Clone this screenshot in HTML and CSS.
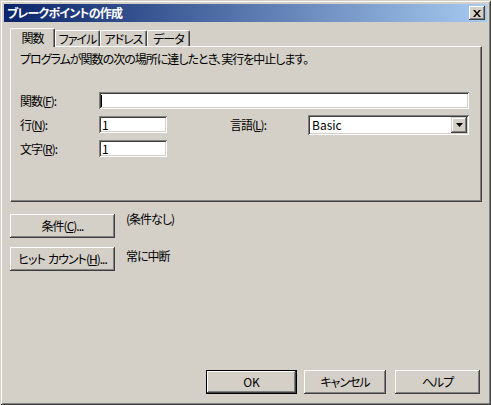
FILE: index.html
```html
<!DOCTYPE html>
<html lang="ja">
<head>
<meta charset="utf-8">
<link rel="stylesheet" href="styles.css">
</head>
<body>
<div class="window">
  <div class="titlebar">
    <span class="title">ブレークポイントの作成</span>
    <button class="close" aria-label="閉じる">
      <svg width="8" height="7" viewBox="0 0 8 7"><path d="M0 0h2l2 2.5L6 0h2L5 3.5 8 7H6L4 4.5 2 7H0l3-3.5z" fill="#000"/></svg>
    </button>
  </div>
  <div class="client">
    <div class="tabs">
      <div class="tab active t1">関数</div>
      <div class="tab t2">ファイル</div>
      <div class="tab t3">アドレス</div>
      <div class="tab t4">データ</div>
    </div>
    <div class="panel">
      <p class="desc">プログラムが関数の次の場所に達したとき、実行を中止します。</p>
      <div class="form">
        <div class="row">
          <span class="label">関数(<u>F</u>):</span>
          <div class="field wide"><span class="caret"></span></div>
        </div>
        <div class="row row-top">
          <span class="label">行(<u>N</u>):</span>
          <div class="field short">1</div>
          <span class="label lang">言語(<u>L</u>):</span>
          <div class="combo">
            <span class="combo-text">Basic</span>
            <span class="combo-btn"><svg width="7" height="4" viewBox="0 0 7 4"><path d="M0 0h7L3.5 4z" fill="#000"/></svg></span>
          </div>
        </div>
        <div class="row">
          <span class="label">文字(<u>R</u>):</span>
          <div class="field short">1</div>
        </div>
      </div>
    </div>
    <div class="action first">
      <button class="btn side">条件(<u>C</u>)...</button>
      <span class="note">(条件なし)</span>
    </div>
    <div class="action second">
      <button class="btn side">ヒット&nbsp; カウント(<u>H</u>)...</button>
      <span class="note">常に中断</span>
    </div>
    <div class="footer">
      <button class="btn ok">OK</button>
      <button class="btn cancel">キャンセル</button>
      <button class="btn help">ヘルプ</button>
    </div>
  </div>
</div>
</body>
</html>
```
FILE: styles.css
```css
* {
  box-sizing: border-box;
  margin: 0;
  padding: 0;
}

body {
  margin: 0;
  width: 491px;
  height: 405px;
  overflow: hidden;
  background: #d4d0c8;
  font-family: "Noto Sans CJK JP", sans-serif;
  font-size: 12px;
  line-height: 14px;
  color: #000;
  font-feature-settings: "palt";
  letter-spacing: -1px;
}

.window {
  width: 491px;
  height: 405px;
  padding: 4px;
  display: flex;
  flex-direction: column;
  background: #d4d0c8;
  box-shadow: inset 1px 1px 0 #d4d0c8, inset -1px -1px 0 #404040, inset 2px 2px 0 #fff, inset -2px -2px 0 #808080;
}

.titlebar {
  height: 18px;
  display: flex;
  align-items: center;
  justify-content: space-between;
  padding: 0 2px 0 3px;
  background: linear-gradient(to right, #0a246a, #a6caf0);
  color: #fff;
  font-weight: bold;
}

.title {
  line-height: 18px;
  letter-spacing: -0.8px;
}

.close {
  width: 16px;
  height: 14px;
  border: none;
  background: #d4d0c8;
  display: flex;
  align-items: center;
  justify-content: center;
  box-shadow: inset -1px -1px 0 #404040, inset 1px 1px 0 #fff, inset -2px -2px 0 #808080;
}

.close svg {
  display: block;
  margin: 0 0 0 -1px;
}

.client {
  flex: 1;
  display: flex;
  flex-direction: column;
  padding: 6px 5px 7px 6px;
}

.tabs {
  display: flex;
  align-items: flex-end;
  height: 18px;
  position: relative;
  z-index: 1;
}

.tab {
  height: 16px;
  border-top: 1px solid #fff;
  border-left: 1px solid #fff;
  border-right: 1px solid #404040;
  border-radius: 2px 2px 0 0;
  box-shadow: inset -1px 0 0 #808080;
  background: #d4d0c8;
  text-align: center;
  line-height: 16px;
}

.tab.active {
  height: 19px;
  margin-bottom: -1px;
  line-height: 17px;
}

.t1 { width: 45px; }
.t2 { width: 45px; }
.t3 { width: 47px; }
.t4 { width: 43px; }

.panel {
  width: 472px;
  height: 156px;
  border-top: 1px solid #fff;
  border-left: 1px solid #fff;
  border-right: 1px solid #404040;
  border-bottom: 1px solid #404040;
  box-shadow: inset -1px -1px 0 #808080;
  padding: 5px 0 0 9px;
}

.desc {
  line-height: 14px;
}

.form {
  margin-top: 26px;
  display: flex;
  flex-direction: column;
  gap: 7px;
}

.row {
  display: flex;
  align-items: center;
  height: 17px;
}

.row-top {
  align-items: flex-start;
}

.label {
  width: 79px;
  line-height: 17px;
}

.lang {
  width: 78px;
  margin-left: 63px;
}

.field {
  height: 17px;
  background: #fff;
  padding: 0 3px;
  line-height: 17px;
  display: flex;
  align-items: center;
  box-shadow: inset 1px 1px 0 #808080, inset -1px -1px 0 #fff, inset 2px 2px 0 #404040, inset -2px -2px 0 #d4d0c8;
}

.wide { width: 370px; }
.short { width: 68px; }

.caret {
  display: block;
  width: 1px;
  height: 12px;
  background: #000;
  margin-left: -1px;
}

.combo {
  width: 161px;
  height: 20px;
  margin-top: -1px;
  background: #fff;
  display: flex;
  align-items: center;
  justify-content: space-between;
  padding: 2px 2px 2px 4px;
  box-shadow: inset 1px 1px 0 #808080, inset -1px -1px 0 #fff, inset 2px 2px 0 #404040, inset -2px -2px 0 #d4d0c8;
}

.combo-text {
  line-height: 16px;
  letter-spacing: 0;
}

.combo-btn {
  width: 16px;
  height: 16px;
  background: #d4d0c8;
  display: flex;
  align-items: center;
  justify-content: center;
  box-shadow: inset -1px -1px 0 #404040, inset 1px 1px 0 #d4d0c8, inset -2px -2px 0 #808080, inset 2px 2px 0 #fff;
}

.combo-btn svg {
  display: block;
}

.btn {
  height: 24px;
  border: none;
  background: #d4d0c8;
  font: inherit;
  letter-spacing: inherit;
  color: #000;
  text-align: center;
  box-shadow: inset -1px -1px 0 #404040, inset 1px 1px 0 #fff, inset -2px -2px 0 #808080;
}

.action {
  display: flex;
  align-items: flex-start;
  gap: 11px;
}

.action.first {
  margin-top: 12px;
}

.action.second {
  margin-top: 9px;
}

.side {
  width: 105px;
}

.note {
  margin-top: -2px;
}

.action.second .note {
  margin-top: 2px;
}

.footer {
  margin-top: auto;
  display: flex;
  padding-left: 196px;
}

.ok {
  width: 91px;
  letter-spacing: 0;
  box-shadow: inset 0 0 0 1px #000, inset -2px -2px 0 #404040, inset 2px 2px 0 #fff, inset -3px -3px 0 #808080;
}

.cancel {
  width: 82px;
  margin-left: 7px;
}

.help {
  width: 85px;
  margin-left: 9px;
}
```
